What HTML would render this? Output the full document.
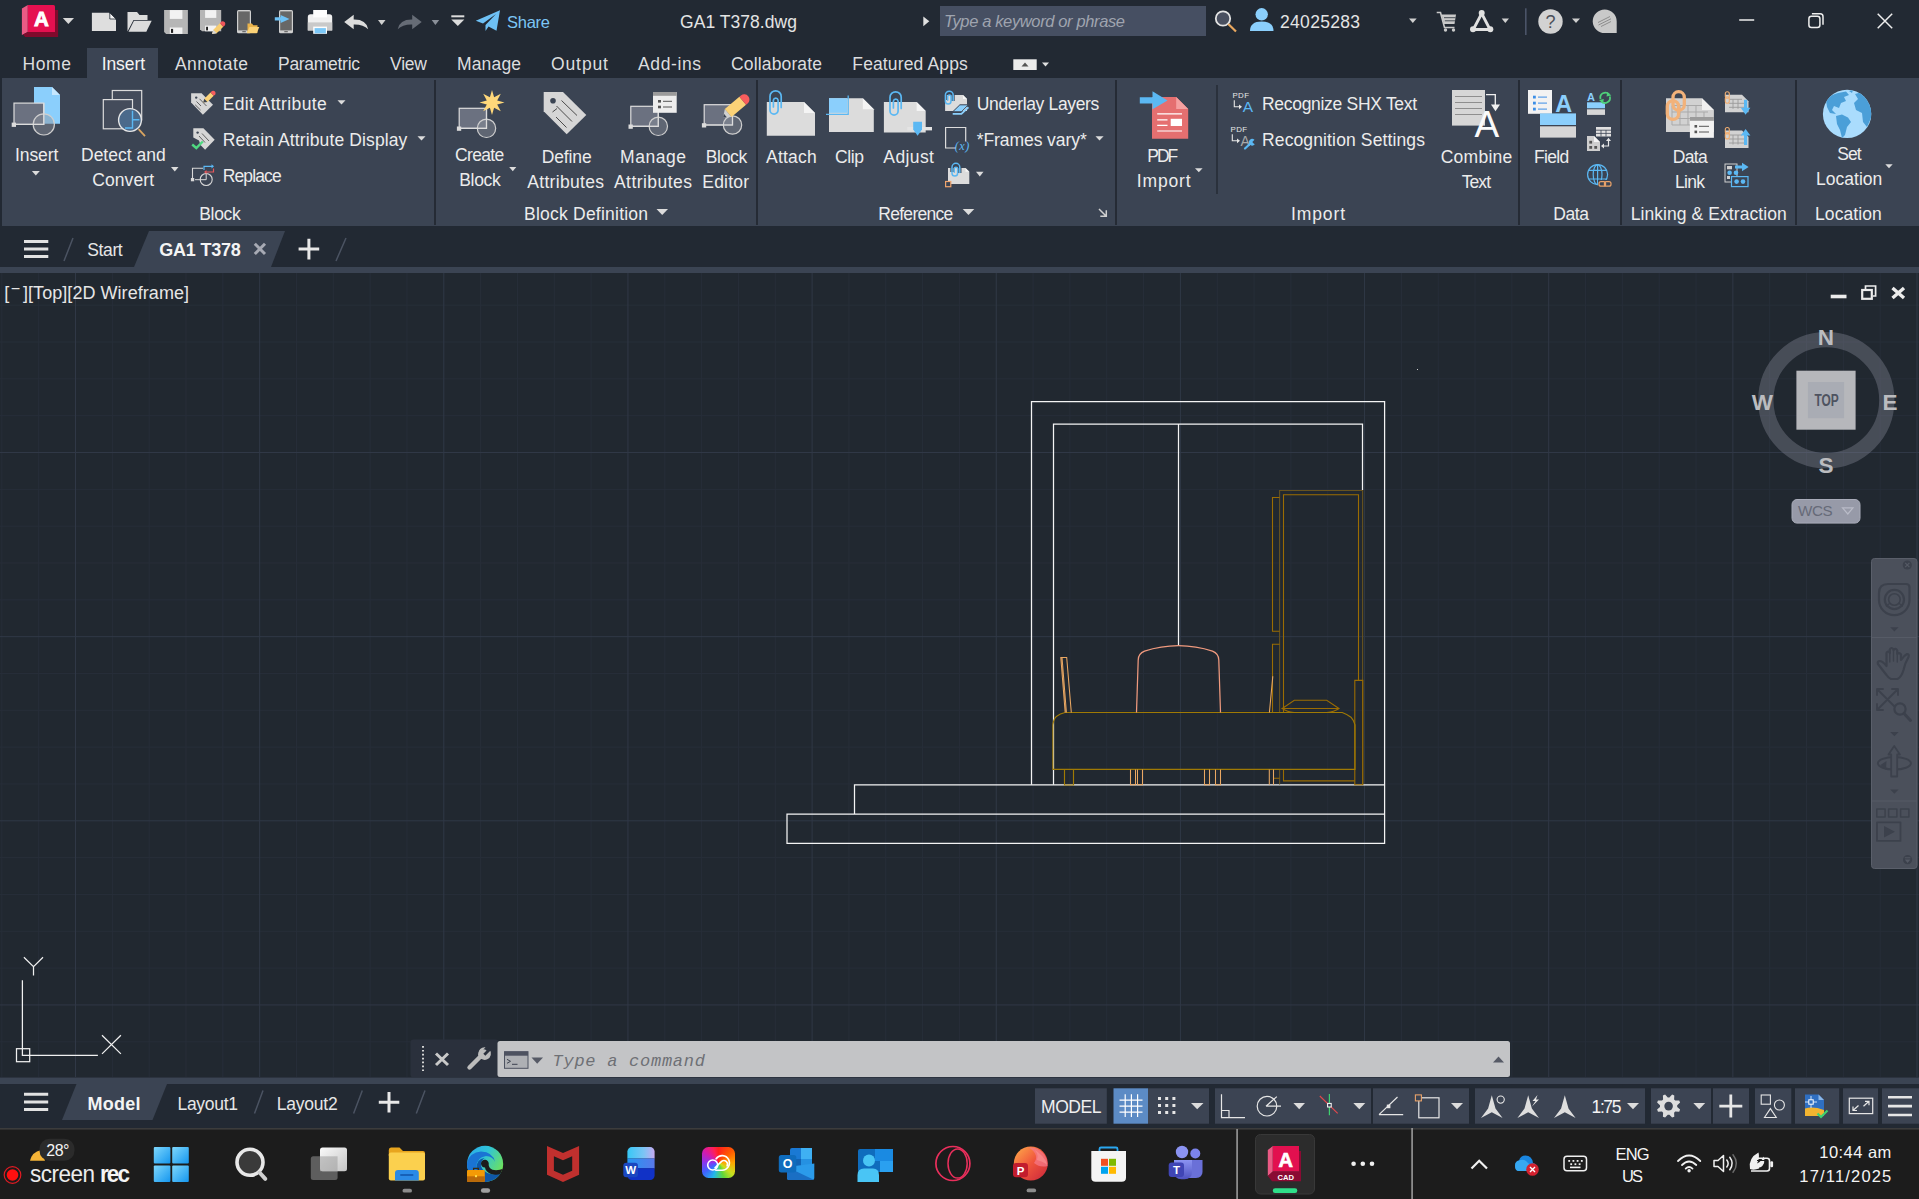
<!DOCTYPE html>
<html><head><meta charset="utf-8"><title>GA1 T378.dwg</title>
<style>
html,body{margin:0;padding:0;background:#212830;overflow:hidden}
#root{position:relative;width:1919px;height:1199px;overflow:hidden;background:#212830;font-family:"Liberation Sans",sans-serif}
.b{position:absolute;display:block}
.t{position:absolute;white-space:nowrap}
svg{overflow:visible}
</style></head><body><div id="root">
<!-- p_base -->
<div class="b" style="left:0;top:0;width:1919px;height:273px;background:#222933"></div>
<div class="b" style="left:2px;top:78px;width:1917px;height:148px;background:#3b4453"></div>
<div class="b" style="left:87px;top:48px;width:71px;height:31px;background:#3b4453"></div>
<div class="b" style="left:434px;top:80px;width:2px;height:145px;background:#252b35"></div>
<div class="b" style="left:756px;top:80px;width:2px;height:145px;background:#252b35"></div>
<div class="b" style="left:1115px;top:80px;width:2px;height:145px;background:#252b35"></div>
<div class="b" style="left:1518px;top:80px;width:2px;height:145px;background:#252b35"></div>
<div class="b" style="left:1620px;top:80px;width:2px;height:145px;background:#252b35"></div>
<div class="b" style="left:1794.5px;top:80px;width:2px;height:145px;background:#252b35"></div>
<div class="b" style="left:1216px;top:85px;width:2px;height:109px;background:#2a313c"></div>
<div class="b" style="left:0;top:267px;width:1919px;height:6px;background:#3b4453"></div>
<svg class="b" style="left:0;top:226px" width="400" height="47"><polygon points="149,5 285,5 271,41 134,41" fill="#3b4453"/><g stroke="#e2e2e2" stroke-width="3"><path d="M24 15.4H48.3M24 22.9H48.3M24 30.5H48.3"/></g><g stroke="#4b5362" stroke-width="1.5"><path d="M73 12L64 35M346 12L336 35"/></g><path d="M254.8 17.8L265 28M265 17.8L254.8 28" stroke="#a7aab4" stroke-width="3"/><path d="M298.6 23H319.2M308.9 12.8V33.4" stroke="#e8e8e8" stroke-width="3"/></svg>
<div class="t" style="left:507.0px;top:14px;font:16.5px/16.5px 'Liberation Sans',sans-serif;color:#7cc6f6;letter-spacing:-0.26px;">Share</div>
<div class="t" style="left:680.0px;top:14px;font:17.5px/17.5px 'Liberation Sans',sans-serif;color:#e4e4e4;letter-spacing:0.05px;">GA1 T378.dwg</div>
<div class="b" style="left:940px;top:6px;width:266px;height:30px;background:#464f62"></div>
<div class="t" style="left:944.0px;top:13px;font:italic 16.5px/16.5px 'Liberation Sans',sans-serif;color:#9fa4af;letter-spacing:-0.37px;">Type a keyword or phrase</div>
<div class="t" style="left:1280.0px;top:14px;font:17.5px/17.5px 'Liberation Sans',sans-serif;color:#e4e4e4;letter-spacing:0.31px;">24025283</div>
<div class="t" style="left:22.5px;top:56px;font:17.5px/17.5px 'Liberation Sans',sans-serif;color:#dcdddf;letter-spacing:0.61px;">Home</div>
<div class="t" style="left:101.7px;top:56px;font:17.5px/17.5px 'Liberation Sans',sans-serif;color:#f4f4f4;letter-spacing:-0.09px;">Insert</div>
<div class="t" style="left:175.0px;top:56px;font:17.5px/17.5px 'Liberation Sans',sans-serif;color:#dcdddf;letter-spacing:0.42px;">Annotate</div>
<div class="t" style="left:278.0px;top:56px;font:17.5px/17.5px 'Liberation Sans',sans-serif;color:#dcdddf;letter-spacing:-0.29px;">Parametric</div>
<div class="t" style="left:390.0px;top:56px;font:17.5px/17.5px 'Liberation Sans',sans-serif;color:#dcdddf;letter-spacing:-0.21px;">View</div>
<div class="t" style="left:457.0px;top:56px;font:17.5px/17.5px 'Liberation Sans',sans-serif;color:#dcdddf;letter-spacing:0.15px;">Manage</div>
<div class="t" style="left:551.0px;top:56px;font:17.5px/17.5px 'Liberation Sans',sans-serif;color:#dcdddf;letter-spacing:0.89px;">Output</div>
<div class="t" style="left:638.0px;top:56px;font:17.5px/17.5px 'Liberation Sans',sans-serif;color:#dcdddf;letter-spacing:0.61px;">Add-ins</div>
<div class="t" style="left:731.0px;top:56px;font:17.5px/17.5px 'Liberation Sans',sans-serif;color:#dcdddf;letter-spacing:0.15px;">Collaborate</div>
<div class="t" style="left:852.3px;top:56px;font:17.5px/17.5px 'Liberation Sans',sans-serif;color:#dcdddf;letter-spacing:0.14px;">Featured Apps</div>
<div class="t" style="left:222.7px;top:96px;font:17.5px/17.5px 'Liberation Sans',sans-serif;color:#ececec;letter-spacing:0.37px;">Edit Attribute</div>
<div class="t" style="left:222.7px;top:132px;font:17.5px/17.5px 'Liberation Sans',sans-serif;color:#ececec;letter-spacing:0.12px;">Retain Attribute Display</div>
<div class="t" style="left:222.7px;top:168px;font:17.5px/17.5px 'Liberation Sans',sans-serif;color:#ececec;letter-spacing:-0.87px;">Replace</div>
<div class="t" style="left:15.0px;top:147px;font:17.5px/17.5px 'Liberation Sans',sans-serif;color:#ececec;letter-spacing:-0.09px;">Insert</div>
<div class="t" style="left:81.0px;top:147px;font:17.5px/17.5px 'Liberation Sans',sans-serif;color:#ececec;">Detect and</div>
<div class="t" style="left:92.3px;top:172px;font:17.5px/17.5px 'Liberation Sans',sans-serif;color:#ececec;letter-spacing:0.07px;">Convert</div>
<div class="t" style="left:455.0px;top:147px;font:17.5px/17.5px 'Liberation Sans',sans-serif;color:#ececec;letter-spacing:-0.65px;">Create</div>
<div class="t" style="left:459.3px;top:172px;font:17.5px/17.5px 'Liberation Sans',sans-serif;color:#ececec;letter-spacing:-0.35px;">Block</div>
<div class="t" style="left:541.7px;top:149px;font:17.5px/17.5px 'Liberation Sans',sans-serif;color:#ececec;letter-spacing:-0.12px;">Define</div>
<div class="t" style="left:527.3px;top:174px;font:17.5px/17.5px 'Liberation Sans',sans-serif;color:#ececec;letter-spacing:0.31px;">Attributes</div>
<div class="t" style="left:620.0px;top:149px;font:17.5px/17.5px 'Liberation Sans',sans-serif;color:#ececec;letter-spacing:0.55px;">Manage</div>
<div class="t" style="left:614.0px;top:174px;font:17.5px/17.5px 'Liberation Sans',sans-serif;color:#ececec;letter-spacing:0.45px;">Attributes</div>
<div class="t" style="left:705.7px;top:149px;font:17.5px/17.5px 'Liberation Sans',sans-serif;color:#ececec;letter-spacing:-0.30px;">Block</div>
<div class="t" style="left:702.3px;top:174px;font:17.5px/17.5px 'Liberation Sans',sans-serif;color:#ececec;letter-spacing:0.20px;">Editor</div>
<div class="t" style="left:766.0px;top:149px;font:17.5px/17.5px 'Liberation Sans',sans-serif;color:#ececec;letter-spacing:0.22px;">Attach</div>
<div class="t" style="left:835.0px;top:149px;font:17.5px/17.5px 'Liberation Sans',sans-serif;color:#ececec;letter-spacing:-0.38px;">Clip</div>
<div class="t" style="left:883.3px;top:149px;font:17.5px/17.5px 'Liberation Sans',sans-serif;color:#ececec;letter-spacing:0.41px;">Adjust</div>
<div class="t" style="left:976.7px;top:96px;font:17.5px/17.5px 'Liberation Sans',sans-serif;color:#ececec;letter-spacing:-0.34px;">Underlay Layers</div>
<div class="t" style="left:976.7px;top:132px;font:17.5px/17.5px 'Liberation Sans',sans-serif;color:#ececec;letter-spacing:-0.07px;">*Frames vary*</div>
<div class="t" style="left:1147.3px;top:148px;font:17.5px/17.5px 'Liberation Sans',sans-serif;color:#ececec;letter-spacing:-2.00px;">PDF</div>
<div class="t" style="left:1136.7px;top:173px;font:17.5px/17.5px 'Liberation Sans',sans-serif;color:#ececec;letter-spacing:0.88px;">Import</div>
<div class="t" style="left:1262.0px;top:96px;font:17.5px/17.5px 'Liberation Sans',sans-serif;color:#ececec;letter-spacing:-0.30px;">Recognize SHX Text</div>
<div class="t" style="left:1262.0px;top:132px;font:17.5px/17.5px 'Liberation Sans',sans-serif;color:#ececec;letter-spacing:0.13px;">Recognition Settings</div>
<div class="t" style="left:1440.7px;top:149px;font:17.5px/17.5px 'Liberation Sans',sans-serif;color:#ececec;letter-spacing:0.26px;">Combine</div>
<div class="t" style="left:1461.7px;top:174px;font:17.5px/17.5px 'Liberation Sans',sans-serif;color:#ececec;letter-spacing:-0.93px;">Text</div>
<div class="t" style="left:1534.0px;top:149px;font:17.5px/17.5px 'Liberation Sans',sans-serif;color:#ececec;letter-spacing:-0.66px;">Field</div>
<div class="t" style="left:1672.7px;top:149px;font:17.5px/17.5px 'Liberation Sans',sans-serif;color:#ececec;letter-spacing:-0.66px;">Data</div>
<div class="t" style="left:1675.0px;top:174px;font:17.5px/17.5px 'Liberation Sans',sans-serif;color:#ececec;letter-spacing:-0.70px;">Link</div>
<div class="t" style="left:1837.3px;top:146px;font:17.5px/17.5px 'Liberation Sans',sans-serif;color:#ececec;letter-spacing:-0.93px;">Set</div>
<div class="t" style="left:1816.0px;top:171px;font:17.5px/17.5px 'Liberation Sans',sans-serif;color:#ececec;letter-spacing:0.02px;">Location</div>
<div class="t" style="left:199.3px;top:206px;font:17.5px/17.5px 'Liberation Sans',sans-serif;color:#ececec;letter-spacing:-0.35px;">Block</div>
<div class="t" style="left:524.0px;top:206px;font:17.5px/17.5px 'Liberation Sans',sans-serif;color:#ececec;letter-spacing:0.23px;">Block Definition</div>
<div class="t" style="left:878.3px;top:206px;font:17.5px/17.5px 'Liberation Sans',sans-serif;color:#ececec;letter-spacing:-0.72px;">Reference</div>
<div class="t" style="left:1291.0px;top:206px;font:17.5px/17.5px 'Liberation Sans',sans-serif;color:#ececec;letter-spacing:0.88px;">Import</div>
<div class="t" style="left:1553.3px;top:206px;font:17.5px/17.5px 'Liberation Sans',sans-serif;color:#ececec;letter-spacing:-0.42px;">Data</div>
<div class="t" style="left:1630.7px;top:206px;font:17.5px/17.5px 'Liberation Sans',sans-serif;color:#ececec;letter-spacing:0.07px;">Linking &amp; Extraction</div>
<div class="t" style="left:1815.0px;top:206px;font:17.5px/17.5px 'Liberation Sans',sans-serif;color:#ececec;letter-spacing:0.08px;">Location</div>
<div class="t" style="left:87.3px;top:242px;font:17.5px/17.5px 'Liberation Sans',sans-serif;color:#e6e6e6;letter-spacing:-0.39px;">Start</div>
<div class="t" style="left:159.3px;top:241px;font:bold 18px/18px 'Liberation Sans',sans-serif;color:#f4f4f4;letter-spacing:-0.23px;">GA1 T378</div>
<!-- p_topicons -->
<svg class="b" style="left:0;top:0" width="1919" height="78" viewBox="0 0 1919 78">
<polygon points="21.9,8.4 27.8,5 27.8,31.9 21.9,35" fill="#ea5a85"/><polygon points="27.8,31.9 55,31.9 55,10 58.1,10 58.1,36.9 25.2,36.9 23,34.4" fill="#800a2c"/><path d="M27.8 5H53.5Q55 5 55 6.5V31.9H27.8Z" fill="#e51050"/><text x="41.3" y="25.9" font-family="Liberation Sans,sans-serif" font-weight="bold" font-size="20.5" fill="#fff" stroke="#fff" stroke-width="0.9" text-anchor="middle">A</text>
<polygon points="62.8,18 74,18 68.4,24" fill="#d8d8d8"/>
<path d="M91.9 12.8H109L116 19.8V30.9H91.9Z" fill="#dedede"/><path d="M109.8 12.8V19H116Z" fill="#f4f4f4" stroke="#222933" stroke-width=".8"/>
<path d="M127.5 31.5V12H137L139.5 15H147.5V20H133.5Z" fill="#dcdcdc"/><path d="M128.5 31.7L134 20.8H151.7L146.3 31.7Z" fill="#dcdcdc"/>
<path d="M164.1 10.1H187.9V33.9H166.1L164.1 31.9Z" fill="#b6b6b6"/><rect x="169.8" y="10.1" width="12.6" height="8.8" fill="#f2f2f2"/><rect x="169.8" y="27.5" width="12.6" height="6.4" fill="#f2f2f2"/><rect x="171.0" y="28.9" width="2.1" height="4.0" fill="#222"/>
<path d="M200 10.1H221.2V31.299999999999997H202L200 29.299999999999997Z" fill="#b6b6b6"/><rect x="205.1" y="10.1" width="11.2" height="7.8" fill="#f2f2f2"/><rect x="205.1" y="25.6" width="11.2" height="5.7" fill="#f2f2f2"/><rect x="206.1" y="26.8" width="1.9" height="3.6" fill="#222"/><path d="M212 34L213.3 29.8L219.8 23.2L223.3 26.7L216.7 33.2Z" fill="#f8cd70"/><path d="M219.8 23.2L221.5 21.5Q223.2 20.6 224.5 22L225 22.6Q225.8 24.2 224.8 25.2L223.3 26.7Z" fill="#f0565a"/><path d="M212 34L213.3 29.8L216.7 33.2Z" fill="#d8d8d8"/>
<rect x="237" y="10" width="14" height="23.3" rx="1.6" fill="#cfcfcf"/><rect x="238.2" y="11.4" width="11.6" height="19" fill="#676767"/><rect x="242.3" y="31.2" width="3.5" height="1" fill="#555"/><path d="M247.5 33V23.5H252L253.3 25.3H257.5V33Z" fill="#e9b24a"/><path d="M246.8 33.3L249.5 27H259.3L256.7 33.3Z" fill="#fbd277"/>
<rect x="279" y="10" width="14" height="23.3" rx="1.6" fill="#cfcfcf"/><rect x="280.2" y="11.4" width="11.6" height="19" fill="#676767"/><rect x="284.3" y="31.2" width="3.5" height="1" fill="#555"/><path d="M274.8 17.2H280.6V15L289.5 18.9L280.6 23V20.5H274.8Z" fill="#6ec1f5"/>
<path d="M307.8 17Q307.8 14.3 310.5 14.3H329.5Q332.2 14.3 332.2 17V30.4H307.8Z" fill="#f0f0f0"/><rect x="307.8" y="22.4" width="24.4" height="8" fill="#c9c9c9"/><rect x="313.2" y="10" width="13.8" height="7.4" fill="#fdfdfd"/><rect x="313.2" y="26.6" width="13.8" height="7.2" fill="#fdfdfd"/><rect x="314.6" y="28.1" width="11.3" height="5.2" fill="#7cc8f8"/>
<g transform="translate(344.2,14.7)"><path d="M0 7.3L9.5 0V4.8Q22 4.5 24 14.5Q19 9.5 9.5 9.8V14.6Z" fill="#dcdcdc"/></g><polygon points="378,20 385.5,20 381.7,25" fill="#cfcfcf"/>
<g transform="translate(421.7,14.7) scale(-1,1)"><path d="M0 7.3L9.5 0V4.8Q22 4.5 24 14.5Q19 9.5 9.5 9.8V14.6Z" fill="#666c76"/></g><polygon points="431.7,20 439.2,20 435.4,25" fill="#8a8f98"/>
<rect x="451.3" y="15.3" width="13" height="2" fill="#dcdcdc"/><polygon points="451.3,19.5 464.3,19.5 457.8,26" fill="#dcdcdc"/>
<path d="M475.8 20.8L500 10.3L496.5 30.8L488.5 26.5L485.5 31V25L496 14L483 23.5Z" fill="#6ec1f5"/>
<polygon points="923.3,16.5 929.3,21.3 923.3,26.2" fill="#e0e0e0"/><circle cx="1223" cy="18.5" r="7.2" fill="#4a5060" stroke="#e4e4e4" stroke-width="1.8"/><path d="M1228.3 24L1236 31.5" stroke="#e9a75f" stroke-width="2.2"/><circle cx="1261.7" cy="14.3" r="6.2" fill="#8bcffc"/><path d="M1250 31Q1250 21.5 1261.7 21.5Q1273.5 21.5 1273.5 31Z" fill="#8bcffc"/>
<polygon points="1409,18.5 1416.7,18.5 1412.8,23" fill="#d0d0d0"/><path d="M1436.7 12.5H1440.5L1444.5 27.5H1454.5" fill="none" stroke="#c9c9c9" stroke-width="1.6"/><path d="M1441.5 14.5H1456L1454.5 24H1444Z" fill="#c9c9c9"/><circle cx="1445.5" cy="30" r="1.7" fill="#c9c9c9"/><circle cx="1453.5" cy="30" r="1.7" fill="#c9c9c9"/><path d="M1444 17.7H1455.5M1444.8 20.8H1455" stroke="#222933" stroke-width=".8"/>
<path d="M1481.7 13.5L1473.3 29.5H1490Z" fill="none" stroke="#e0e0e0" stroke-width="2.8" stroke-linejoin="round"/><circle cx="1481.7" cy="13" r="3" fill="#e0e0e0"/><circle cx="1473" cy="29.3" r="3" fill="#e0e0e0"/><circle cx="1490.3" cy="29.3" r="3" fill="#e0e0e0"/><polygon points="1501.7,18.5 1509,18.5 1505.3,23" fill="#d0d0d0"/><rect x="1525" y="8.3" width="1.6" height="26.7" fill="#4b5468"/><circle cx="1550.5" cy="21.5" r="12.2" fill="#d2d2d2"/><text x="1550.5" y="28" font-family="Liberation Sans,sans-serif" font-size="18" fill="#4a4f59" text-anchor="middle">?</text><polygon points="1572,18.5 1580,18.5 1576,23" fill="#d0d0d0"/><path d="M1592.7 21.5A12 12 0 0 1 1616.7 21.5V33H1604.7A12 12 0 0 1 1592.7 21.5Z" fill="#c9c9c9"/><path d="M1598 22.5L1610 16.5M1598.5 25L1611 18.8M1601 26.5L1611 21.5" stroke="#8d8d8d" stroke-width="1"/>
<g transform="translate(-0.8,-0.3)"><path d="M1740 20.3H1755" stroke="#eeeeee" stroke-width="1.5"/><rect x="1809.7" y="16.5" width="11" height="11.3" rx="2.5" fill="none" stroke="#eeeeee" stroke-width="1.5"/><path d="M1812.7 14H1821Q1823.8 14 1823.8 17V25" fill="none" stroke="#eeeeee" stroke-width="1.5"/><path d="M1878.5 14L1893 28.5M1893 14L1878.5 28.5" stroke="#eeeeee" stroke-width="1.5"/></g>
<rect x="1013.3" y="59.3" width="23.4" height="10.7" fill="#ececec"/><polygon points="1021.5,66.5 1028.5,66.5 1025,62.5" fill="#555"/><polygon points="1042,62.5 1049,62.5 1045.5,66.5" fill="#e0e0e0"/>
</svg>
<!-- p_ribicons -->
<svg class="b" style="left:0;top:0" width="1919" height="230" viewBox="0 0 1919 230">
<path d="M34 87H52L60 95V123.8H34Z" fill="#8bcffc"/><path d="M52 87V95H60Z" fill="#c6e7fe"/><rect x="14" y="103.1" width="29.8" height="21.3" fill="#6b7180" stroke="#dcdcdc" stroke-width="1.2"/><circle cx="43.8" cy="124.4" r="10.6" fill="#8b909c" fill-opacity=".45" stroke="#cfcfcf" stroke-width="1.2"/><path d="M43.8 103.1V124.4H14" fill="none" stroke="#dcdcdc" stroke-width="1.2"/><rect x="11.7" y="122.60000000000001" width="4.3" height="4.3" fill="#dcdcdc"/>
<polygon points="31.9,171 39.8,171 35.8,175.6" fill="#dcdcdc"/><rect x="112.3" y="90.5" width="29.4" height="29.4" fill="#444c5b" stroke="#dcdcdc" stroke-width="1.2"/><rect x="103.3" y="99.6" width="29.2" height="29.2" fill="#444c5b" stroke="#dcdcdc" stroke-width="1.2"/><circle cx="130" cy="120" r="11.4" fill="#4b6a8b" stroke="#e6e6e6" stroke-width="1.4"/><path d="M125 128H132.5V110.8M132.5 119.8H139.4" fill="none" stroke="#5bb8f3" stroke-width="1.4"/><path d="M138.6 129.2L145 136.2" stroke="#d9a560" stroke-width="1.8"/>
<polygon points="171,166.9 178.5,166.9 174.8,171.6" fill="#dcdcdc"/><polygon points="191.1,93.3 201.6,93.3 213,104.7 202.9,114.7 191.1,102.5" fill="#d6d6d6"/><circle cx="196.2" cy="97.6" r="1.2" fill="#3b4453"/><path d="M196.5 101.5L201 106M199.5 98.8L206.5 106M195.2 104.8L200.5 110" stroke="#555" stroke-width=".9"/><path d="M203.2 102.6L204.3 98.8L210.5 92.6L213.7 95.8L207.4 102Z" fill="#fbd277"/><path d="M210.5 92.6L212 91.1Q213.7 90.2 215 91.6Q216.2 93 215.2 94.5L213.7 95.8Z" fill="#f85d5d"/><path d="M203.2 102.6L204.3 98.8L207.4 102Z" fill="#3b4453"/>
<polygon points="337.5,100.3 345.5,100.3 341.5,104.6" fill="#dcdcdc"/><polygon points="193.3,128.3 203.4,128.3 214.7,139.7 205.1,149.7 200.5,145 199,140.5 193.3,137.5" fill="#d6d6d6"/><circle cx="197.6" cy="132.6" r="1.2" fill="#3b4453"/><path d="M199 136L205 142.5M202 133.5L209 141" stroke="#555" stroke-width=".9"/><path d="M192.2 144.5L196.3 148L202.8 141.5" fill="none" stroke="#4fd880" stroke-width="2.4"/>
<polygon points="417.5,136.3 425.5,136.3 421.5,140.6" fill="#dcdcdc"/><path d="M192.5 178.5V168.3H203" fill="none" stroke="#d8d8d8" stroke-width="1.1"/><rect x="190.9" y="178" width="3.3" height="3.3" fill="#d8d8d8"/><circle cx="206.2" cy="179.5" r="6" fill="none" stroke="#d8d8d8" stroke-width="1.1"/><path d="M195 179.7H206.2V173" fill="none" stroke="#d8d8d8" stroke-width="1"/><path d="M204 170V166.3H212" fill="none" stroke="#5bb8f3" stroke-width="1.2"/><polygon points="211.5,164.2 214,166.3 211.5,168.4" fill="#5bb8f3"/><path d="M213.5 168.5V172H206" fill="none" stroke="#e5585c" stroke-width="1.2"/><polygon points="206.5,170 204,172 206.5,174" fill="#e5585c"/>
<rect x="459.2" y="108.3" width="27.3" height="20.0" fill="#6b7180" stroke="#dcdcdc" stroke-width="1.2"/><circle cx="486.5" cy="128.3" r="9.2" fill="#8b909c" fill-opacity=".45" stroke="#cfcfcf" stroke-width="1.2"/><path d="M486.5 108.3V128.3H459.2" fill="none" stroke="#dcdcdc" stroke-width="1.2"/><rect x="456.9" y="126.50000000000001" width="4.3" height="4.3" fill="#dcdcdc"/><polygon points="492.0,90.0 494.1,97.3 500.8,93.7 497.2,100.4 504.5,102.5 497.2,104.6 500.8,111.3 494.1,107.7 492.0,115.0 489.9,107.7 483.2,111.3 486.8,104.6 479.5,102.5 486.8,100.4 483.2,93.7 489.9,97.3" fill="#ffd87a"/>
<polygon points="509.2,167 516.3,167 512.8,171.3" fill="#dcdcdc"/><polygon points="543.7,92 563,92 586.3,115 566.7,134.2 543.7,111.3" fill="#d6d6d6"/><circle cx="553" cy="100.8" r="2.8" fill="#3b4453"/><path d="M561.5 100.5L577 115.5M556.5 106L572 121.5M552.5 112L557 108.5M556 117L566.5 127.5" stroke="#4b4b4b" stroke-width="1"/>
<rect x="630.8" y="106.3" width="27.5" height="20.0" fill="#6b7180" stroke="#dcdcdc" stroke-width="1.2"/><circle cx="658.3" cy="126.3" r="9.2" fill="#8b909c" fill-opacity=".45" stroke="#cfcfcf" stroke-width="1.2"/><path d="M658.3 106.3V126.3H630.8" fill="none" stroke="#dcdcdc" stroke-width="1.2"/><rect x="628.5" y="124.5" width="4.3" height="4.3" fill="#dcdcdc"/><rect x="653" y="92" width="23.7" height="20.8" fill="#ededed"/><rect x="653" y="92" width="23.7" height="3.8" fill="#9b9b9b"/><rect x="658" y="100" width="3" height="2.6" fill="#555"/><rect x="658" y="105.7" width="3" height="2.6" fill="#555"/><path d="M663 101.3H672M663 107H672" stroke="#555" stroke-width="1"/>
<rect x="704.2" y="104.7" width="28.3" height="20.3" fill="#6b7180" stroke="#dcdcdc" stroke-width="1.2"/><circle cx="732.5" cy="125" r="9.2" fill="#8b909c" fill-opacity=".45" stroke="#cfcfcf" stroke-width="1.2"/><path d="M732.5 104.7V125H704.2" fill="none" stroke="#dcdcdc" stroke-width="1.2"/><rect x="701.9000000000001" y="123.2" width="4.3" height="4.3" fill="#dcdcdc"/><g transform="translate(723.2,117.2) rotate(-40)"><polygon points="0,0 6.5,-5.2 6.5,5.2" fill="#d0d0d0"/><polygon points="0,0 2.7,-2.1 2.7,2.1" fill="#3b4453"/><rect x="6.5" y="-5.2" width="19" height="10.4" fill="#fbd277"/><path d="M25.5 -5.2H27.5A5.2 5.2 0 0 1 27.5 5.2H25.5Z" fill="#f85d5d"/></g>
<path d="M766.8 102.1H804L815 113.1V135.7H766.8Z" fill="#dcdcdc"/><path d="M804 102.1V113.1H815Z" fill="#f4f4f4"/><path d="M781.2 107.5V96.4A5.6 5.6 0 0 0 770.0 96.4V110.0A4.0 4.0 0 0 0 778.1 110.0V100.1A2.4 2.4 0 0 0 773.4 100.1V107.0" fill="none" stroke="#5bb8f3" stroke-width="1.7" stroke-linecap="round"/>
<path d="M829 98.2H862.8L873.8 109.2V132H829Z" fill="#dcdcdc"/><path d="M862.8 98.2V109.2H873.8Z" fill="#f4f4f4"/><rect x="829" y="98.2" width="18" height="14.6" fill="#8bcffc"/><path d="M848.2 95.4V114.3H826" fill="none" stroke="#5bb8f3" stroke-width="1.3"/>
<path d="M883.9 102.1H916.7L925.7 111.1V132.5H883.9Z" fill="#dcdcdc"/><path d="M916.7 102.1V111.1H925.7Z" fill="#f4f4f4"/><path d="M901.2 108.5V97.4A5.6 5.6 0 0 0 890.0 97.4V111.0A4.0 4.0 0 0 0 898.1 111.0V101.1A2.4 2.4 0 0 0 893.4 101.1V108.0" fill="none" stroke="#5bb8f3" stroke-width="1.7" stroke-linecap="round"/><rect x="907.3" y="127" width="24.7" height="3.4" fill="#e4e4e4"/><polygon points="913.2,121.7 922,121.7 922,129.5 917.6,135.7 913.2,129.5" fill="#5bb8f3"/>
<path d="M945.1 95H963L967 99V110.9H945.1Z" fill="#dcdcdc"/><path d="M963 95V99H967Z" fill="#f6f6f6"/><g stroke="#3b4453" stroke-width="3.4" fill="none" opacity=".9"><path d="M953 101V95A3.9 3.9 0 0 0 945.2 95V100"/></g><path d="M953.2 100.4V95.1A3.9 3.9 0 0 0 945.4 95.1V101.2A2.8 2.8 0 0 0 951.0 101.2V96.7A1.6 1.6 0 0 0 947.7 96.7V100.2" fill="none" stroke="#5bb8f3" stroke-width="1.5" stroke-linecap="round"/><polygon points="959.9,104.8 968.4,104.8 961.4,111.8 952.7,111.8" fill="#8bcffc" stroke="#3b4453" stroke-width="1"/><path d="M952.7 113.9H961.4L968.4 107.3" fill="none" stroke="#8bcffc" stroke-width="1.9"/>
<path d="M956 148H945.6V127.5H965.7V141.5" fill="none" stroke="#dcdcdc" stroke-width="1.2"/><text x="954.8" y="150" font-family="Liberation Serif,serif" font-style="italic" font-size="12.2" fill="#5bb8f3" textLength="14.5">(x)</text>
<polygon points="1095.5,136.3 1103.6,136.3 1099.5,140.5" fill="#dcdcdc"/><path d="M948 168H965.5L969.3 171.8V183.9H948Z" fill="#dcdcdc"/><path d="M965.5 168V171.8H969.3Z" fill="#f6f6f6"/><g stroke="#3b4453" stroke-width="3.4" fill="none" opacity=".9"><path d="M959.8 173V167A3.9 3.9 0 0 0 952 167V172"/></g><path d="M959.8 172.5V167.2A3.9 3.9 0 0 0 952.0 167.2V173.3A2.8 2.8 0 0 0 957.6 173.3V168.8A1.6 1.6 0 0 0 954.3 168.8V172.3" fill="none" stroke="#5bb8f3" stroke-width="1.5" stroke-linecap="round"/><rect x="945.6" y="181.5" width="5.2" height="5.2" fill="#3b4453" stroke="#f0a56e" stroke-width="1.2"/><polygon points="976,171.8 983.5,171.8 979.8,176.4" fill="#dcdcdc"/><polygon points="962.7,209 974.3,209 968.5,215" fill="#dcdcdc"/><polygon points="656.5,209 668,209 662.2,215" fill="#dcdcdc"/><path d="M1099 209L1105.5 215.5M1106.3 210.3V216.3H1100.3" fill="none" stroke="#d0d0d0" stroke-width="1.5"/>
<path d="M1152 96.9H1176.2L1188.2 108.9V138.7H1152Z" fill="#e56f70"/><path d="M1176.2 96.9V108.9H1188.2Z" fill="#f5a1a1"/><path d="M1157.2 113.8H1182M1157.2 119.8H1167.5M1157.2 125.4H1167.5M1157.2 131H1182" stroke="#fff" stroke-width="1.2"/><rect x="1170.7" y="118.8" width="11.3" height="7.2" fill="#fff"/><path d="M1139.8 97.3H1152.5V91.3L1167.5 100.4L1152.5 109.2V103.5H1139.8Z" fill="#5bb8f3"/>
<polygon points="1195,168.2 1202.6,168.2 1198.8,172.3" fill="#dcdcdc"/><text x="1232.4" y="97.8" font-family="Liberation Sans,sans-serif" font-size="7.9" fill="#e6e6e6" textLength="16.6">PDF</text><path d="M1234.3 100.3V106.8H1240" fill="none" stroke="#e6e6e6" stroke-width="1.1"/><polygon points="1239,104.4 1242,106.8 1239,109.2" fill="#e6e6e6"/><text x="1242.8" y="112" font-family="Liberation Sans,sans-serif" font-size="15.5" fill="#5bb8f3">A</text>
<text x="1230.6" y="132" font-family="Liberation Sans,sans-serif" font-size="7.9" fill="#e6e6e6" textLength="16.6">PDF</text><path d="M1232.3 134.3V140.8H1238" fill="none" stroke="#e6e6e6" stroke-width="1.1"/><polygon points="1237,138.4 1240,140.8 1237,143.2" fill="#e6e6e6"/><text x="1240.6" y="146" font-family="Liberation Sans,sans-serif" font-size="14" fill="#a8a8a8">A</text><path d="M1245 148.5L1251.5 142.5" stroke="#5bb8f3" stroke-width="2.2" stroke-linecap="round"/><path d="M1254.5 139.8A3.3 3.3 0 1 0 1254.8 144.2L1252 142.3Z" fill="#5bb8f3"/>
<rect x="1452" y="90" width="33" height="35.6" fill="#d6d6d6"/><path d="M1455 96.5H1482M1455 102.5H1482M1455 108.5H1482M1455 114.5H1482" stroke="#8e8e8e" stroke-width="1"/><path d="M1486 94.6H1495.3V105" fill="none" stroke="#f0f0f0" stroke-width="1.3"/><polygon points="1491,104.4 1500,104.4 1495.5,111.3" fill="#f0f0f0"/><text x="1486.8" y="137.2" font-family="Liberation Sans,sans-serif" font-size="37" fill="#fafafa" text-anchor="middle">A</text>
<rect x="1528" y="90" width="24" height="23.8" fill="#f2f2f2"/><rect x="1533" y="95.7" width="2.8" height="2.8" fill="#3b8ee6"/><path d="M1538 97.1H1547" stroke="#3b8ee6" stroke-width="1"/><rect x="1533" y="101.7" width="2.8" height="2.8" fill="#3b8ee6"/><path d="M1538 103.1H1547" stroke="#3b8ee6" stroke-width="1"/><rect x="1533" y="107.7" width="2.8" height="2.8" fill="#3b8ee6"/><path d="M1538 109.1H1547" stroke="#3b8ee6" stroke-width="1"/><text x="1563.8" y="111.5" font-family="Liberation Sans,sans-serif" font-weight="bold" font-size="23.5" fill="#8bcffc" text-anchor="middle">A</text><rect x="1540" y="113.4" width="36" height="11.6" fill="#8bcffc"/><rect x="1540" y="126.3" width="36" height="11.3" fill="#d6d6d6"/>
<text x="1587" y="101" font-family="Liberation Sans,sans-serif" font-weight="bold" font-size="11" fill="#8bcffc">A</text><rect x="1587" y="102.3" width="18" height="6" fill="#8bcffc"/><rect x="1587" y="109.3" width="18" height="5.6" fill="#d6d6d6"/><path d="M1600.5 99A5 5 0 0 1 1609 94.3M1609.8 96.5A5 5 0 0 1 1601.3 101.3" fill="none" stroke="#4fd07a" stroke-width="1.8"/><polygon points="1607.3,92 1611.3,95.6 1606.5,96.6" fill="#4fd07a"/><polygon points="1603,103.6 1599,100 1603.8,99" fill="#4fd07a"/>
<rect x="1596" y="127" width="15" height="9.5" fill="#e0e0e0"/><path d="M1596 130.2H1611M1596 133.4H1611M1601 130V136.5M1606 130V136.5" stroke="#3b4453" stroke-width=".8"/><path d="M1587 136H1594L1600 142V151H1587Z" fill="#cfcfcf"/><path d="M1594 136V142H1600Z" fill="#f4f4f4"/><rect x="1589.3" y="140.8" width="2.8" height="2.8" fill="#555"/><rect x="1589.3" y="146" width="2.8" height="2.8" fill="#555"/><rect x="1594.3" y="146" width="2.8" height="2.8" fill="#555"/><path d="M1603 146H1608.5V140.5" fill="none" stroke="#e6e6e6" stroke-width="1.2"/><polygon points="1606,141 1608.5,137.8 1611,141" fill="#e6e6e6"/><polygon points="1604,143.6 1601,146 1604,148.4" fill="#e6e6e6"/>
<g fill="none" stroke="#5bb8f3" stroke-width="1.2"><circle cx="1597.6" cy="174.6" r="10"/><ellipse cx="1597.6" cy="174.6" rx="4.4" ry="10"/><path d="M1597.6 164.6V184.6M1588.5 170.3H1606.7M1588.5 179H1606.7"/></g><rect x="1598" y="180" width="14" height="7.5" fill="#3b4453"/><rect x="1599" y="181.6" width="6.6" height="4.6" rx="2" fill="none" stroke="#e9a36a" stroke-width="1.2"/><rect x="1604.4" y="181.6" width="6.6" height="4.6" rx="2" fill="none" stroke="#e9a36a" stroke-width="1.2"/>
<path d="M1666 98.2H1702L1713.9 110V132H1666Z" fill="#d2d2d2"/><path d="M1702 98.2V110H1713.9Z" fill="#f0f0f0"/><path d="M1672 105.5H1702M1672 112H1708M1672 118.5H1708M1672 125H1708M1672 105.5V125M1680 105.5V125M1688 105.5V125M1696 105.5V125M1704 112V125" stroke="#a9a9a9" stroke-width="1"/><rect x="1689.9" y="117" width="24" height="20.8" fill="#f2f2f2"/><rect x="1689.9" y="117" width="24" height="3.8" fill="#9b9b9b"/><rect x="1694.5" y="125" width="2.6" height="2.6" fill="#555"/><rect x="1694.5" y="130.6" width="2.6" height="2.6" fill="#555"/><path d="M1699 126.3H1709M1699 132H1709" stroke="#555" stroke-width="1"/><rect x="1673" y="91.7" width="11.3" height="18.6" rx="5.6" fill="none" stroke="#f2b27a" stroke-width="3.3"/><rect x="1667.3" y="100.8" width="11.3" height="18.6" rx="5.6" fill="none" stroke="#f2b27a" stroke-width="3.3"/>
<path d="M1725 94.8H1742L1748.5 101.3V112.3H1725Z" fill="#d2d2d2"/><path d="M1729 99.3H1742M1729 103.3H1745M1729 107.3H1745M1733 99.3V108.8M1738 99.3V108.8" stroke="#9a9a9a" stroke-width=".9"/><rect x="1725.3" y="91.8" width="4" height="6.4" rx="2" fill="none" stroke="#f0ae72" stroke-width="1.1"/><rect x="1725.3" y="96.8" width="4" height="6.4" rx="2" fill="none" stroke="#f0ae72" stroke-width="1.1"/><path d="M1744 99.8V107.8H1740.8L1745.6 114.8L1750.4 107.8H1747.2V99.8Z" fill="#5bb8f3"/><path d="M1725 130.5H1742L1748.5 137.0V148.0H1725Z" fill="#d2d2d2"/><path d="M1729 135.0H1742M1729 139.0H1745M1729 143.0H1745M1733 135.0V144.5M1738 135.0V144.5" stroke="#9a9a9a" stroke-width=".9"/><rect x="1725.3" y="127.5" width="4" height="6.4" rx="2" fill="none" stroke="#f0ae72" stroke-width="1.1"/><rect x="1725.3" y="132.5" width="4" height="6.4" rx="2" fill="none" stroke="#f0ae72" stroke-width="1.1"/><path d="M1744 145.0V135.5H1740.8L1745.6 129.0L1750.4 135.5H1747.2V145.0Z" fill="#5bb8f3"/>
<rect x="1725" y="164" width="12" height="18" fill="none" stroke="#d0d0d0" stroke-width="1"/><rect x="1727" y="166" width="5" height="3.3" fill="#d0d0d0"/><rect x="1727" y="176" width="3" height="3" fill="#d0d0d0"/><circle cx="1729.6" cy="172.8" r="2.3" fill="#5bb8f3"/><circle cx="1736" cy="172.8" r="2.3" fill="#5bb8f3"/><path d="M1735 165.5H1742V162.7L1748.6 167L1742 171.3V168.5H1735Z" fill="#5bb8f3"/><rect x="1731.5" y="176.6" width="16.5" height="10" fill="#3b4453" stroke="#5bb8f3" stroke-width="1.2"/><circle cx="1736.6" cy="181.6" r="2.3" fill="#5bb8f3"/><circle cx="1743" cy="181.6" r="2.3" fill="#5bb8f3"/>
<circle cx="1847.1" cy="113.9" r="24.2" fill="#aadcfd"/><clipPath id="gc"><circle cx="1847.1" cy="113.9" r="24.2"/></clipPath><g clip-path="url(#gc)" fill="#4b9fd8"><path d="M1826 100Q1830 95 1838 93L1846 91.5L1849 95L1844 97L1846 101L1841 103L1839 108L1834 106L1832 110L1836 114L1830 113L1827 107Z"/><path d="M1836 116L1842 114.5L1848 117.5L1851 122L1847 127L1845 135L1842 138L1840 130L1837 124Z"/><path d="M1855 94L1862 92L1868 97L1872 104L1871 118L1867 127L1863 122L1862 113L1856 110L1854 103L1858 99Z"/><path d="M1849 91L1853 90L1852 93Z"/></g>
<polygon points="1885.3,164.3 1892.7,164.3 1889.0,168.3" fill="#dcdcdc"/></svg>
<!-- p_draw -->
<svg class="b" style="left:0;top:273px" width="1919" height="805" viewBox="0 273 1919 805">
<rect x="0" y="273" width="1919" height="805" fill="#212830"/>
<path d="M1.84 273V1078M38.67 273V1078M112.33 273V1078M149.16 273V1078M185.99 273V1078M222.82 273V1078M296.48 273V1078M333.31 273V1078M370.14 273V1078M406.97 273V1078M480.63 273V1078M517.46 273V1078M554.29 273V1078M591.12 273V1078M664.78 273V1078M701.61 273V1078M738.44 273V1078M775.27 273V1078M848.93 273V1078M885.76 273V1078M922.59 273V1078M959.42 273V1078M1033.08 273V1078M1069.91 273V1078M1106.74 273V1078M1143.57 273V1078M1217.23 273V1078M1254.06 273V1078M1290.89 273V1078M1327.72 273V1078M1401.38 273V1078M1438.21 273V1078M1475.04 273V1078M1511.87 273V1078M1585.53 273V1078M1622.36 273V1078M1659.19 273V1078M1696.02 273V1078M1769.68 273V1078M1806.51 273V1078M1843.34 273V1078M1880.17 273V1078M0 305.18H1919M0 342.01H1919M0 378.84H1919M0 415.67H1919M0 489.33H1919M0 526.16H1919M0 562.99H1919M0 599.82H1919M0 673.48H1919M0 710.31H1919M0 747.14H1919M0 783.97H1919M0 857.63H1919M0 894.46H1919M0 931.29H1919M0 968.12H1919M0 1041.78H1919" stroke="#272e39" stroke-width="1" fill="none"/>
<path d="M75.5 273V1078M259.65 273V1078M443.8 273V1078M627.95 273V1078M812.1 273V1078M996.25 273V1078M1180.4 273V1078M1364.55 273V1078M1548.7 273V1078M1732.85 273V1078M1917.0 273V1078M0 452.5H1919M0 636.65H1919M0 820.8H1919M0 1004.95H1919" stroke="#303846" stroke-width="1" fill="none"/>
<g fill="none" stroke="#f4f4f4" stroke-width="1.25"><path d="M1031.5 784.8V401.6H1384.6V843.3H787V814H1384.6"/><path d="M854.5 814V784.8H1384.6"/><path d="M1053.5 784.8V424H1362.5V490"/><path d="M1178.5 424V645.7"/></g>
<g fill="none" stroke="#67531f" stroke-width="1.1"><path d="M1279.6 712.5V490.5H1362.6V784.5M1279.6 769.3V784.5"/></g>
<g fill="none" stroke="#9a6c02" stroke-width="1.1"><path d="M1283.5 712.5V494.7H1358.5V680.4"/><path d="M1279.6 497.5H1272.5V631.3H1279.6M1279.6 644.3H1272.5V712.5"/><path d="M1354.8 680.4H1362.8V784.8H1354.8Z"/><path d="M1282.3 708.5L1294.3 700.3H1326.7L1339 708.5Q1334 712 1326.7 712.5M1294.3 712.5Q1287 712 1282.3 708.5H1339"/><path d="M1283.5 769.3V780.9H1354.8M1273.5 778.2H1279.6"/></g>
<g fill="none" stroke="#a07a04" stroke-width="1.15"><path d="M1052.9 769.3V725Q1053.5 718.5 1056.7 716.2Q1060 713.5 1065 712.5H1342.2Q1347.5 714.5 1351 717.2Q1353.5 720 1355 724.8V769.3ZM1052.9 769.3H1355"/><path d="M1064.5 769.3V785H1073.5V769.3"/></g>
<g fill="none" stroke="#eaa863" stroke-width="1.05"><path d="M1130.5 769.5V784.8H1135.5V769.5M1137.5 769.5V784.8H1142.5V769.5M1204.5 769.5V784.8H1209.5V769.5M1215.5 769.5V784.8H1220.5V769.5M1269.3 769.5V784.8M1273.5 769.5V784.8"/><path d="M1065.2 712.5L1060.8 657.4H1066.7L1071.3 712.5M1062 657.4L1066.4 712.5"/><path d="M1272.8 676.3L1269.4 712.5"/></g>
<path d="M1136.5 712.5L1138.2 660Q1138.3 653.8 1144.5 651.2Q1161 645.8 1178.5 645.7Q1196 645.8 1212.5 651.2Q1218.7 653.8 1218.8 660L1220.5 712.5" fill="none" stroke="#f09a7e" stroke-width="1.25"/>
<rect x="1417" y="369" width="1" height="1" fill="#ccc"/><g fill="none" stroke="#f0f0f0" stroke-width="1.25"><rect x="16.5" y="1048.7" width="13.2" height="13"/><path d="M22.4 980.3V1055.4H97.9"/><path d="M23.9 957.3L33.5 966.6L43 957.3M33.5 966.6V975.6M102 1035.2L120.9 1053.9M120.9 1035.2L102 1053.9"/></g>
<g stroke="#ececec" fill="none"><path d="M1830.7 296.5H1846.5" stroke-width="3.6"/><rect x="1862.2" y="290" width="9.6" height="8.8" stroke-width="2.2"/><path d="M1865.5 289V286H1875.6V296H1873" stroke-width="1.7"/><path d="M1892.5 288L1904 298M1904 288L1892.5 298" stroke-width="3.4"/></g>
<circle cx="1826.3" cy="400.2" r="60.5" fill="none" stroke="#828494" stroke-opacity=".4" stroke-width="15.3"/><rect x="1796.4" y="370.7" width="59.2" height="59" fill="#b6b7bb"/><rect x="1807.9" y="382" width="36.2" height="36.2" fill="#a9acb4"/><text x="1814.4" y="405.8" font-family="Liberation Sans,sans-serif" font-weight="bold" font-size="15.8" fill="#4e5360" textLength="24.3" lengthAdjust="spacingAndGlyphs">TOP</text><text x="1825.9" y="345.1" font-family="Liberation Sans,sans-serif" font-weight="bold" font-size="22.5" fill="#bbbcbf" text-anchor="middle">N</text><text x="1825.9" y="473.1" font-family="Liberation Sans,sans-serif" font-weight="bold" font-size="22.5" fill="#bbbcbf" text-anchor="middle">S</text><text x="1762.4" y="409.5" font-family="Liberation Sans,sans-serif" font-weight="bold" font-size="22.5" fill="#bbbcbf" text-anchor="middle">W</text><text x="1890" y="409.5" font-family="Liberation Sans,sans-serif" font-weight="bold" font-size="22.5" fill="#bbbcbf" text-anchor="middle">E</text>
<rect x="1792" y="499.5" width="68" height="23.6" rx="5" fill="#979aa8" stroke="#a9acb9" stroke-width="1"/><text x="1798.1" y="516" font-family="Liberation Sans,sans-serif" font-size="15.2" fill="#666a78" textLength="34.5">WCS</text><polygon points="1842.5,507.8 1853,507.8 1847.8,514" fill="#979aa8" stroke="#b9bbc7" stroke-width="1.2"/>
<rect x="1871.5" y="558.5" width="45.5" height="310" rx="3" fill="#4b505b" stroke="#5a5f6a" stroke-width="1"/><path d="M1872 637.5H1917M1872 801H1917" stroke="#565b66" stroke-width="1"/><circle cx="1907.3" cy="565" r="4.6" fill="#3c414c"/><path d="M1905.2 562.9L1909.4 567.1M1909.4 562.9L1905.2 567.1" stroke="#555a65" stroke-width="1.2"/><g fill="none" stroke="#3c414c" stroke-width="2.2" stroke-linejoin="round" stroke-linecap="round"><path d="M1888 584H1906Q1909.5 584 1909.5 587.5V600A15.2 15.2 0 0 1 1894.3 615.2A15.2 15.2 0 0 1 1879 600V593Q1879 584 1888 584Z"/><circle cx="1894.4" cy="599.5" r="9.6"/><circle cx="1894.4" cy="599.5" r="5.8" stroke-width="1.6"/><path d="M1886.5 606L1889.5 603.5M1902.3 606L1899.3 603.5" stroke-width="1.4"/><path d="M1886.5 675Q1881 668 1878 664Q1877 661.5 1879.5 661Q1882.5 661 1886.5 666V653Q1887.8 650 1889.8 653V649.5Q1891.5 646.5 1893.5 649.5V650Q1895.3 647.5 1897.3 650.5V654Q1899 652 1901 654.5V660Q1904 655.5 1907 654Q1909.5 654 1908.5 657Q1905 663 1903.5 670Q1901.5 677 1897.5 679H1891Q1888.5 678 1886.5 675Z"/><path d="M1889.8 653V662M1893.5 650V661M1897.3 652V662" stroke-width="1.4"/><path d="M1877 689L1898 710M1898 689L1877 710M1877 695V689H1883M1892 689H1898V695M1877 704V710H1883" stroke-width="1.8"/><circle cx="1900" cy="709" r="5.6" fill="#4b505b"/><path d="M1904.5 714L1910.5 720.5" stroke-width="3"/><ellipse cx="1894.4" cy="763.3" rx="16.5" ry="6.3" stroke-width="2"/><path d="M1891.2 776.5V754.5H1888.5L1894.2 746L1899.9 754.5H1897.2V776.5Z" fill="#4b505b" stroke-width="1.8"/><rect x="1876.8" y="809" width="8.3" height="8" stroke-width="1.5"/><rect x="1888.6" y="809" width="8.3" height="8" stroke-width="1.5"/><rect x="1900.6" y="809" width="8.3" height="8" stroke-width="1.5"/><rect x="1877" y="822.3" width="23.5" height="18.6" stroke-width="1.8"/></g><polygon points="1880.5,765 1886.5,761 1886,770" fill="#3c414c"/><polygon points="1884,826 1884,837.5 1895,831.7" fill="#3c414c"/><polygon points="1890.2,627.3 1898.6,627.3 1894.4,631.5999999999999" fill="#3c414c"/><polygon points="1890.2,732 1898.6,732 1894.4,736.3" fill="#3c414c"/><polygon points="1890.2,789.5 1898.6,789.5 1894.4,793.8" fill="#3c414c"/><circle cx="1907.6" cy="859.7" r="4.6" fill="#3c414c"/><polygon points="1904.8,859.5 1910.4,859.5 1907.6,863" fill="#555a65"/><path d="M1904.8 857.8H1910.4" stroke="#555a65" stroke-width="1"/>
<rect x="410.5" y="1039.5" width="88" height="38" rx="3" fill="#2a303c"/><path d="M423 1046V1072" stroke="#d4d4d4" stroke-width="2" stroke-dasharray="1.7 2.2"/><path d="M436 1053.5L448 1065M448 1053.5L436 1065" stroke="#c9c9c9" stroke-width="3"/><path d="M469.5 1067.5L481 1056" stroke="#bcbcbc" stroke-width="4.4" stroke-linecap="round"/><path d="M489.5 1049.5L484.5 1054.5L481.5 1051.5L485.5 1047.3A6.3 6.3 0 1 0 489.5 1049.5Z" fill="#bcbcbc"/><circle cx="483.2" cy="1054.3" r="5" fill="#bcbcbc"/><path d="M489.8 1049.3L484.3 1054.8" stroke="#2a303c" stroke-width="2.8"/><rect x="497.5" y="1041" width="1012.5" height="36" rx="2.5" fill="#c3c4c6"/><rect x="504.5" y="1051.7" width="23.5" height="16.6" fill="#aeb0b4" stroke="#4d5260" stroke-width="1"/><rect x="504.5" y="1051.7" width="23.5" height="4" fill="#4d5260"/><path d="M507 1059.3L510.5 1061.3L507 1063.3M512 1064.3H517.5" stroke="#3d424f" stroke-width="1" fill="none"/><polygon points="531.5,1057.5 543,1057.5 537.2,1063.8" fill="#565a66"/><polygon points="1493,1062.5 1504,1062.5 1498.5,1056.5" fill="#565a66"/>
</svg>
<div class="t" style="left:4.2px;top:284px;font:18px/18px 'Liberation Sans',sans-serif;color:#e6e6e6;">[</div>
<div class="t" style="left:10.8px;top:281px;font:16px/16px 'Liberation Sans',sans-serif;color:#e6e6e6;">−</div>
<div class="t" style="left:23.0px;top:284px;font:18px/18px 'Liberation Sans',sans-serif;color:#e6e6e6;letter-spacing:0.05px;">][Top][2D Wireframe]</div>
<div class="t" style="left:552.5px;top:1053px;font:italic 17px/17px 'Liberation Mono',monospace;color:#6e7075;letter-spacing:0.74px;">Type a command</div>
<!-- p_status -->
<svg class="b" style="left:0;top:1077px" width="1919" height="52" viewBox="0 1077 1919 52">
<rect x="0" y="1077" width="1919" height="1" fill="#2c333f"/><rect x="0" y="1078" width="1919" height="6.2" fill="#3b4453"/><rect x="0" y="1084.2" width="1919" height="44.8" fill="#222933"/>
<polygon points="76.5,1084 167,1084 152.5,1120 62,1120" fill="#3b4453"/><g stroke="#e2e2e2" stroke-width="3"><path d="M24 1094.3H48.2M24 1101.9H48.2M24 1109.5H48.2"/></g><g stroke="#4b5362" stroke-width="1.5"><path d="M263 1090.5L254.5 1113.5M362.3 1090.5L353.6 1113.5M425 1090.5L416.3 1113.5"/></g><path d="M378.8 1102.2H399.3M389 1092V1112.4" stroke="#e8e8e8" stroke-width="3"/>
<rect x="1035" y="1088.3" width="71.8" height="35.4" fill="#3c4453"/><rect x="1148" y="1088.3" width="61.0" height="35.4" fill="#3c4453"/><rect x="1215" y="1088.3" width="156.0" height="35.4" fill="#3c4453"/><rect x="1373" y="1088.3" width="96.0" height="35.4" fill="#3c4453"/><rect x="1475" y="1088.3" width="170.0" height="35.4" fill="#3c4453"/><rect x="1651" y="1088.3" width="60.0" height="35.4" fill="#3c4453"/><rect x="1713" y="1088.3" width="36.0" height="35.4" fill="#3c4453"/><rect x="1755" y="1088.3" width="36.3" height="35.4" fill="#3c4453"/><rect x="1795" y="1088.3" width="44.2" height="35.4" fill="#3c4453"/><rect x="1843" y="1088.3" width="35.0" height="35.4" fill="#3c4453"/><rect x="1882" y="1088.3" width="37.0" height="35.4" fill="#3c4453"/><rect x="1113.5" y="1088.3" width="34.5" height="35.4" fill="#5c8bc5"/>
<path d="M1125.2 1094.2V1117M1131.4 1094.2V1117M1137.6 1094.2V1117M1119.5 1100.2H1142.5M1119.5 1106.2H1142.5M1119.5 1112.2H1142.5" stroke="#fff" stroke-width="1.2"/><rect x="1158.0" y="1097.0" width="3" height="3" fill="#e6e6e6"/><rect x="1158.0" y="1104.0" width="3" height="3" fill="#e6e6e6"/><rect x="1158.0" y="1111.0" width="3" height="3" fill="#e6e6e6"/><rect x="1165.2" y="1097.0" width="3" height="3" fill="#e6e6e6"/><rect x="1165.2" y="1104.0" width="3" height="3" fill="#e6e6e6"/><rect x="1165.2" y="1111.0" width="3" height="3" fill="#e6e6e6"/><rect x="1172.4" y="1097.0" width="3" height="3" fill="#e6e6e6"/><rect x="1172.4" y="1104.0" width="3" height="3" fill="#e6e6e6"/><rect x="1172.4" y="1111.0" width="3" height="3" fill="#e6e6e6"/><polygon points="1191,1103 1203.5,1103 1197.2,1109.3" fill="#dcdcdc"/>
<g fill="none" stroke="#e6e6e6" stroke-width="1.2"><path d="M1221.5 1094.2V1117.7H1245M1221.5 1110.5H1229V1117.7"/><circle cx="1267" cy="1106.2" r="9.8"/><path d="M1266 1106.2H1281M1266 1106.2L1276.8 1096.6"/><path d="M1379 1114.6H1403.2M1379 1114.6L1397.5 1097"/><rect x="1418.8" y="1097.8" width="20.2" height="20" /></g><rect x="1386.8" y="1104.6" width="3.6" height="3.6" fill="#e6e6e6"/><rect x="1415.4" y="1094.9" width="6" height="6" fill="#3c4453" stroke="#e9a36a" stroke-width="1.1"/><path d="M1319.8 1096L1337.7 1113.4" stroke="#e5484d" stroke-width="1.1"/><path d="M1329.4 1094V1115.3" stroke="#3fd06f" stroke-width="1.2"/><rect x="1327.6" y="1103.4" width="3.6" height="3.6" fill="#3c4453" stroke="#fff" stroke-width="1"/><polygon points="1293.4,1103 1305,1103 1299.2,1109.3" fill="#dcdcdc"/><polygon points="1353.3,1103 1365.3,1103 1359.3,1109.3" fill="#dcdcdc"/><polygon points="1451,1103 1463,1103 1457.0,1109.3" fill="#dcdcdc"/>
<path d="M1491.8 1095.3L1495.5 1108.5L1502.6 1118L1491.8 1112.3L1481 1118L1488.1 1108.5Z" fill="#dedede"/><circle cx="1500.7" cy="1099.6" r="3.6" fill="none" stroke="#e6e6e6" stroke-width="1.1"/><path d="M1528.2 1095.3L1531.9 1108.5L1539.0 1118L1528.2 1112.3L1517.4 1118L1524.5 1108.5Z" fill="#dedede"/><path d="M1537.5 1095L1532.5 1101H1535.5L1532 1106.5L1539 1099.5H1536Z" fill="#e6e6e6"/><path d="M1564.8 1095.3L1568.5 1108.5L1575.6 1118L1564.8 1112.3L1554 1118L1561.1 1108.5Z" fill="#dedede"/><polygon points="1627,1103 1639,1103 1633.0,1109.3" fill="#dcdcdc"/><polygon points="1680.1,1109.6 1679.2,1111.8 1675.2,1111.6 1674.1,1112.7 1674.3,1116.7 1672.1,1117.6 1669.4,1114.7 1667.8,1114.7 1665.1,1117.6 1662.9,1116.7 1663.1,1112.7 1662.0,1111.6 1658.0,1111.8 1657.1,1109.6 1660.0,1106.9 1660.0,1105.3 1657.1,1102.6 1658.0,1100.4 1662.0,1100.6 1663.1,1099.5 1662.9,1095.5 1665.1,1094.6 1667.8,1097.5 1669.4,1097.5 1672.1,1094.6 1674.3,1095.5 1674.1,1099.5 1675.2,1100.6 1679.2,1100.4 1680.1,1102.6 1677.2,1105.3 1677.2,1106.9" fill="#dedede"/><circle cx="1668.6" cy="1106.1" r="4.3" fill="#3c4453"/><polygon points="1693.3,1103 1705.2,1103 1699.2,1109.3" fill="#dcdcdc"/><path d="M1719.3 1106.1H1742.3M1730.8 1094.6V1117.6" stroke="#e6e6e6" stroke-width="2.8"/><g fill="none" stroke="#e6e6e6" stroke-width="1.1"><rect x="1761.2" y="1095" width="9.2" height="9.2"/><circle cx="1779.4" cy="1105" r="5"/><path d="M1770.4 1108.6L1776.3 1117.5H1764.5Z"/></g>
<path d="M1805 1094.6H1818.5L1824 1100V1116H1805Z" fill="#2f6fc2"/><path d="M1818.5 1094.6V1100H1824Z" fill="#8ab6e8"/><path d="M1805 1108.5Q1813 1106 1824 1110V1116H1805Z" fill="#f2b430"/><path d="M1805 1102H1817M1811 1096V1108" stroke="#cfe3fa" stroke-width="1"/><rect x="1808.8" y="1099.8" width="4.4" height="4.4" fill="#2f6fc2" stroke="#fff" stroke-width="1"/><path d="M1817.5 1113.5L1821 1117L1827.5 1110.5" fill="none" stroke="#3fd06f" stroke-width="2.2"/><rect x="1849.3" y="1098.2" width="23.4" height="15.4" fill="none" stroke="#e6e6e6" stroke-width="1.2"/><path d="M1853 1110.5L1858.5 1105.5M1853 1106.5V1110.5H1857M1869 1101.3L1863.5 1106.3M1865 1101.3H1869V1105.3" fill="none" stroke="#e6e6e6" stroke-width="1.2"/><path d="M1888 1097.3H1912M1888 1106.1H1912M1888 1115H1912" stroke="#e6e6e6" stroke-width="2.6"/>
</svg>
<div class="t" style="left:87.5px;top:1095px;font:bold 18px/18px 'Liberation Sans',sans-serif;color:#f4f4f4;letter-spacing:0.25px;">Model</div>
<div class="t" style="left:177.5px;top:1096px;font:17.5px/17.5px 'Liberation Sans',sans-serif;color:#e6e6e6;letter-spacing:-0.30px;">Layout1</div>
<div class="t" style="left:276.7px;top:1096px;font:17.5px/17.5px 'Liberation Sans',sans-serif;color:#e6e6e6;letter-spacing:-0.21px;">Layout2</div>
<div class="t" style="left:1041.0px;top:1099px;font:17.5px/17.5px 'Liberation Sans',sans-serif;color:#f0f0f0;letter-spacing:-0.43px;">MODEL</div>
<div class="t" style="left:1591.6px;top:1099px;font:17.5px/17.5px 'Liberation Sans',sans-serif;color:#f4f4f4;letter-spacing:-1.42px;">1:75</div>
<!-- p_taskbar -->
<svg class="b" style="left:0;top:1128px" width="1919" height="71" viewBox="0 1128 1919 71">
<defs><linearGradient id="gw" x1="0" y1="0" x2="1" y2="1"><stop offset="0" stop-color="#7ed7fc"/><stop offset="1" stop-color="#1496ef"/></linearGradient><linearGradient id="ge" x1="0" y1="0" x2="1" y2="1"><stop offset="0" stop-color="#2a7fd6"/><stop offset=".5" stop-color="#1fa3d8"/><stop offset="1" stop-color="#55d36b"/></linearGradient><linearGradient id="gcc" x1="0" y1="0" x2="1" y2="1"><stop offset="0" stop-color="#c23bff"/><stop offset=".3" stop-color="#ff2d6f"/><stop offset=".55" stop-color="#ff8a1f"/><stop offset=".8" stop-color="#c9e21f"/><stop offset="1" stop-color="#1fd1a5"/></linearGradient><linearGradient id="gwd" x1="0" y1="0" x2="0" y2="1"><stop offset="0" stop-color="#b9b4f0"/><stop offset=".35" stop-color="#4aa5f5"/><stop offset="1" stop-color="#1247c9"/></linearGradient><linearGradient id="gpp" x1="0" y1="0" x2="1" y2="1"><stop offset="0" stop-color="#ffb04a"/><stop offset=".5" stop-color="#f0553c"/><stop offset="1" stop-color="#c8243c"/></linearGradient><linearGradient id="gtv" x1="0" y1="0" x2="1" y2="1"><stop offset="0" stop-color="#fafafa"/><stop offset="1" stop-color="#c4c4c4"/></linearGradient><linearGradient id="gtm" x1="0" y1="0" x2="0" y2="1"><stop offset="0" stop-color="#8b93f2"/><stop offset="1" stop-color="#4e52c0"/></linearGradient><linearGradient id="ge2" x1="0" y1="0" x2="1" y2=".55"><stop offset="0" stop-color="#2aa6ee"/><stop offset=".5" stop-color="#2fc3d8"/><stop offset="1" stop-color="#6fe35a"/></linearGradient><linearGradient id="gw1" x1="0" y1="0" x2="1" y2="0"><stop offset="0" stop-color="#35c8f6"/><stop offset=".6" stop-color="#7cc4f4"/><stop offset="1" stop-color="#c9a9f2"/></linearGradient><linearGradient id="gw2" x1="0" y1="0" x2="1" y2="0"><stop offset="0" stop-color="#2396f2"/><stop offset="1" stop-color="#5a78ea"/></linearGradient></defs>
<rect x="0" y="1128" width="1919" height="71" fill="#1c1c1c"/><rect x="0" y="1128" width="1919" height="1.6" fill="#3c3c3c"/>
<circle cx="12.5" cy="1175" r="8.3" fill="none" stroke="#e21b23" stroke-width="1.2"/><circle cx="12.5" cy="1175" r="5.8" fill="#ff1010"/><path d="M30 1160.7Q32 1152 41 1150L45 1160.7Z" fill="#f5b437"/><rect x="39.5" y="1138.7" width="35" height="22" rx="10" fill="#2b2b2b"/>
<g fill="url(#gw)"><rect x="153.8" y="1147" width="16.6" height="16.6" rx="1"/><rect x="172.2" y="1147" width="16.6" height="16.6" rx="1"/><rect x="153.8" y="1165.4" width="16.6" height="16.6" rx="1"/><rect x="172.2" y="1165.4" width="16.6" height="16.6" rx="1"/></g>
<circle cx="250" cy="1162.3" r="13" fill="#3a3a3a" stroke="#e8e8e8" stroke-width="3.6"/><path d="M259.5 1172.5L265.3 1178.8" stroke="#d0d0d0" stroke-width="4" stroke-linecap="round"/>
<rect x="310.8" y="1156.3" width="26.8" height="23.8" rx="2.5" fill="#5e5e5e"/><rect x="320" y="1147.5" width="27" height="23.8" rx="2.5" fill="url(#gtv)"/><rect x="320" y="1156.3" width="17.6" height="15" fill="#9c9c9c" opacity=".55"/>
<path d="M388.8 1150Q388.8 1147.5 391 1147.5H399.5L403 1151H423Q425 1151 425 1153V1156H388.8Z" fill="#e8a51e"/><rect x="388.8" y="1152.5" width="36.2" height="28" rx="2" fill="#fbd04e"/><path d="M395 1180.5V1173Q395 1170 398 1170H415.8Q418.8 1170 418.8 1173V1180.5Z" fill="#2b8ae6"/><rect x="400" y="1174" width="13.5" height="2" rx="1" fill="#1660b8"/><rect x="402.5" y="1188.8" width="9.5" height="3.8" rx="1.9" fill="#8c8c8c"/>
<clipPath id="ec"><circle cx="485.1" cy="1163.9" r="18.1"/></clipPath><g clip-path="url(#ec)"><rect x="466" y="1145" width="38" height="38" fill="url(#ge2)"/><path d="M466 1170Q466 1153 481 1151.5Q493 1152 495 1162Q493 1156.5 486 1156Q476 1157.5 476.5 1168Q478 1176 488 1178L486 1184H466Z" fill="#1a74d4"/><path d="M476.5 1168Q476.5 1159 484.5 1158Q480.5 1161 481 1166Q483 1172.5 491 1174Q497 1175 504 1171V1184H480Q476.5 1176 476.5 1168Z" fill="#0f57a8"/><path d="M481 1163.8A3.9 3.9 0 1 1 488.7 1164.6Q488.5 1168 492.5 1169.8Q497.5 1171.2 504 1168.5V1173Q497 1176 491 1174Q485.5 1171.8 485 1167.6Q481.3 1167.3 481 1163.8Z" fill="#1c1c1c"/><path d="M500.5 1173.5L505 1171V1184H494Z" fill="#1c1c1c"/></g><rect x="467" y="1170" width="17.8" height="11.8" rx="1" fill="#f39a06"/><rect x="467" y="1176.3" width="17.8" height="5.5" fill="#b9690a"/><path d="M473.6 1170V1168.3H478.4V1170" fill="none" stroke="#3a2a10" stroke-width="1.3"/><rect x="475" y="1175.2" width="2" height="2" fill="#ffe14a"/><rect x="480.9" y="1188.2" width="9.2" height="4.6" rx="2.3" fill="#a0a0a0"/>
<path d="M547 1146L563 1152.9L579.1 1146V1174.8L563 1182L547 1174.8Z" fill="#c0302e"/><path d="M553.9 1156.2L563 1160.2L572.2 1156.2V1170.8L563 1174.8L553.9 1170.8Z" fill="#1c1c1c"/>
<clipPath id="wc"><rect x="627.4" y="1147.1" width="27.2" height="32.9" rx="4.5"/></clipPath><g clip-path="url(#wc)"><rect x="627" y="1147" width="28" height="11.5" fill="url(#gw1)"/><rect x="627" y="1158.4" width="28" height="10" fill="url(#gw2)"/><rect x="627" y="1168.2" width="28" height="12" fill="#1132c6"/></g><rect x="623.3" y="1162.7" width="14.7" height="14.6" rx="3" fill="#1b47c0"/><text x="630.6" y="1174.4" font-family="Liberation Sans,sans-serif" font-weight="bold" font-size="11.5" fill="#fff" text-anchor="middle">W</text>
<rect x="790" y="1148" width="22" height="22" rx="2" fill="#1a79d4"/><rect x="801" y="1148" width="11" height="11" fill="#3fb0f3"/><rect x="790" y="1159" width="11" height="11" fill="#1263b4"/><rect x="801" y="1159" width="11" height="8" fill="#2591e2"/><path d="M787 1167L814.3 1163.5V1178Q814.3 1180 812.3 1180H789Q787 1180 787 1178Z" fill="#2b9bea"/><path d="M787 1167L814.3 1180H789Q787 1180 787 1178Z" fill="#1a6fc4"/><rect x="778.8" y="1155" width="17.5" height="17.5" rx="2.5" fill="#0f6cbd"/><text x="787.5" y="1168.2" font-family="Liberation Sans,sans-serif" font-weight="bold" font-size="12.5" fill="#fff" text-anchor="middle">O</text>
<rect x="858" y="1149" width="35" height="23" rx="2" fill="#0f6cbd"/><rect x="875" y="1149" width="18" height="12" fill="#1a8ae2"/><rect x="880" y="1161" width="13" height="11" fill="#2aa0f0"/><circle cx="869" cy="1160.5" r="6" fill="#49c5f5"/><path d="M857.5 1182V1175Q857.5 1168.5 864 1168.5H873Q879 1168.5 879 1175V1182Z" fill="#49c5f5"/>
<circle cx="952.9" cy="1163.5" r="17" fill="none" stroke="#ea2f5c" stroke-width="1.7"/><ellipse cx="957.6" cy="1163.5" rx="9.6" ry="14.6" fill="none" stroke="#ea2f5c" stroke-width="1.5"/>
<circle cx="1030.8" cy="1163.5" r="17" fill="url(#gpp)"/><path d="M1030 1147Q1040 1152 1037 1160Q1047 1163 1047.5 1166Q1046 1156 1030 1147Z" fill="#ffd0a8" opacity=".6"/><path d="M1029 1147.5Q1040 1155 1034 1163Q1040 1168 1047.5 1166A17 17 0 0 0 1029 1147.5Z" fill="#f77a8a" opacity=".7"/><rect x="1013" y="1163" width="15" height="14.2" rx="3" fill="#c21d2e"/><text x="1020.5" y="1174.6" font-family="Liberation Sans,sans-serif" font-weight="bold" font-size="11.5" fill="#fff" text-anchor="middle">P</text><rect x="1026.6" y="1188.5" width="9.5" height="3.8" rx="1.9" fill="#8c8c8c"/>
<path d="M1099.5 1152V1149Q1099.5 1147.5 1101 1147.5H1116Q1117.5 1147.5 1117.5 1149V1152" fill="none" stroke="#2aa7f0" stroke-width="1.8"/><path d="M1091.3 1151H1126V1177.5Q1126 1181.8 1121.7 1181.8H1095.6Q1091.3 1181.8 1091.3 1177.5Z" fill="#f4f4f4"/><rect x="1101" y="1158.8" width="7" height="7" fill="#f25022"/><rect x="1109" y="1158.8" width="7" height="7" fill="#7fba00"/><rect x="1101" y="1166.8" width="7" height="7" fill="#00a4ef"/><rect x="1109" y="1166.8" width="7" height="7" fill="#ffb900"/>
<circle cx="1195.3" cy="1153.5" r="5" fill="#7b83eb"/><path d="M1189 1160H1202.5V1172Q1202.5 1177.5 1196 1178H1189Z" fill="#6a70d8"/><circle cx="1182" cy="1152" r="6.2" fill="#8b93f2"/><path d="M1174 1160H1192V1172Q1192 1179.3 1184.5 1179.3H1181.5Q1174 1179.3 1174 1172Z" fill="url(#gtm)"/><rect x="1168.7" y="1162.4" width="15.3" height="14.6" rx="3" fill="#4045b5"/><text x="1176.4" y="1174.2" font-family="Liberation Sans,sans-serif" font-weight="bold" font-size="11.5" fill="#fff" text-anchor="middle">T</text>
<rect x="1236.3" y="1129" width="1.6" height="70" fill="#9a9a9a"/><rect x="1411.3" y="1128" width="1.6" height="71" fill="#9a9a9a"/>
<rect x="1255.5" y="1134.5" width="59" height="59.5" rx="5" fill="#2c2c2c" stroke="#383838" stroke-width="1"/><polygon points="1267.8,1150 1272.8,1146 1272.8,1171.4 1267.8,1176" fill="#ea5a84"/><polygon points="1267.8,1176 1272.8,1171.4 1299,1171.4 1301,1174 1301,1181.3 1272,1181.3" fill="#8a0b33"/><rect x="1299" y="1151" width="2" height="25" fill="#8a0b33"/><rect x="1272.8" y="1146" width="26.2" height="25.4" fill="#e2104f"/><text x="1285.8" y="1167" font-family="Liberation Sans,sans-serif" font-weight="bold" font-size="20" fill="#fff" stroke="#fff" stroke-width="0.7" text-anchor="middle">A</text><text x="1285.8" y="1180" font-family="Liberation Sans,sans-serif" font-weight="bold" font-size="7.6" fill="#fff" text-anchor="middle">CAD</text><rect x="1272.8" y="1188.3" width="24.5" height="4.7" rx="2.3" fill="#2fe08a"/><circle cx="1353.6" cy="1163.8" r="2.3" fill="#f0f0f0"/><circle cx="1362.8" cy="1163.8" r="2.3" fill="#f0f0f0"/><circle cx="1372" cy="1163.8" r="2.3" fill="#f0f0f0"/>
<path d="M1471.5 1168.5L1479.2 1160.7L1487 1168.5" fill="none" stroke="#f0f0f0" stroke-width="2.2"/><path d="M1519 1171H1532Q1536.3 1171 1536.3 1167Q1536.3 1163.5 1533 1163Q1532 1155.5 1525.5 1155.5Q1520.5 1155.5 1519 1160.5Q1515 1161 1515 1166Q1515 1171 1519 1171Z" fill="#1a86e0"/><path d="M1519 1160.5Q1524 1158 1528 1163L1536 1168Q1535 1171 1532 1171H1519Q1515 1171 1515 1166Q1515 1161 1519 1160.5Z" fill="#3fb0f5" opacity=".8"/><circle cx="1532.5" cy="1169.5" r="6.3" fill="#d3212f"/><path d="M1530 1167L1535 1172M1535 1167L1530 1172" stroke="#fff" stroke-width="1.4"/><rect x="1564" y="1156.2" width="22.5" height="14.5" rx="3" fill="none" stroke="#f0f0f0" stroke-width="1.5"/><rect x="1568.3" y="1160" width="1.8" height="1.8" fill="#f0f0f0"/><rect x="1572.5" y="1160" width="1.8" height="1.8" fill="#f0f0f0"/><rect x="1576.7" y="1160" width="1.8" height="1.8" fill="#f0f0f0"/><rect x="1580.9" y="1160" width="1.8" height="1.8" fill="#f0f0f0"/><rect x="1570.3" y="1163.3" width="1.8" height="1.8" fill="#f0f0f0"/><rect x="1574.5" y="1163.3" width="1.8" height="1.8" fill="#f0f0f0"/><rect x="1578.7" y="1163.3" width="1.8" height="1.8" fill="#f0f0f0"/><rect x="1570" y="1166.6" width="10.5" height="1.6" fill="#f0f0f0"/><g fill="none" stroke="#f0f0f0" stroke-width="1.8" stroke-linecap="round"><path d="M1678 1161Q1689 1150 1700.3 1161"/><path d="M1682 1165Q1689 1158 1696.3 1165"/><path d="M1685.7 1168.6Q1689 1165.3 1692.5 1168.6"/></g><circle cx="1689.1" cy="1170.8" r="1.7" fill="#f0f0f0"/><path d="M1714 1160.5H1718L1723.5 1155.5V1171.5L1718 1166.5H1714Z" fill="none" stroke="#f0f0f0" stroke-width="1.5" stroke-linejoin="round"/><g fill="none" stroke-width="1.5" stroke-linecap="round"><path d="M1726.8 1160Q1729.5 1163.5 1726.8 1167" stroke="#f0f0f0"/><path d="M1729.8 1157.3Q1734.5 1163.5 1729.8 1169.7" stroke="#f0f0f0"/><path d="M1733 1154.8Q1739.8 1163.5 1733 1172.2" stroke="#6a6a6a"/></g><path d="M1757 1158.2H1767Q1769.5 1158.2 1769.5 1160.7V1168.5Q1769.5 1171 1767 1171H1751" fill="none" stroke="#f0f0f0" stroke-width="1.6"/><rect x="1770.3" y="1161.3" width="2.8" height="6" rx="1.2" fill="#f0f0f0"/><path d="M1750 1169Q1748 1158 1758.5 1152.5Q1760 1158 1757 1163.5Q1762 1161 1763.5 1156.5Q1767 1164 1759 1168.5Q1754 1170.5 1750 1169Z" fill="#f0f0f0"/><path d="M1757 1160.5H1765V1168H1759" fill="none" stroke="#1c1c1c" stroke-width="1"/></svg>
<div class="b" style="left:702.2px;top:1146.8px;width:33.2px;height:31.2px;border-radius:6.5px;background:conic-gradient(from 0deg at 50% 50%,#ff1f1f 0deg,#ff5a00 50deg,#ffa400 90deg,#c8e020 130deg,#5fd83a 160deg,#22b8e8 200deg,#3f62ff 235deg,#8a35ee 270deg,#d81aa8 310deg,#ff1f55 340deg,#ff1f1f 360deg)"></div><svg class="b" style="left:702.2px;top:1146.8px" width="34" height="32" viewBox="702.2 1146.8 34 32"><g fill="none" stroke="#fff" stroke-width="1.6" stroke-linecap="round"><circle cx="712.9" cy="1164.8" r="5"/><path d="M716.3 1158.6A7.3 7.3 0 1 1 722 1170H716"/><path d="M715.2 1167.6L721.8 1161.2A3.6 3.6 0 0 1 727.3 1165.6"/></g></svg>
<div class="t" style="left:46.3px;top:1143px;font:16px/16px 'Liberation Sans',sans-serif;color:#f4f4f4;letter-spacing:-0.50px;">28°</div>
<div class="t" style="left:30.0px;top:1164px;font:22.5px/22.5px 'Liberation Sans',sans-serif;color:#ececec;letter-spacing:-0.51px;transform:scaleY(1.1);transform-origin:0 18px;">screen</div>
<div class="t" style="left:100.0px;top:1164px;font:bold 22.5px/22.5px 'Liberation Sans',sans-serif;color:#f4f4f4;letter-spacing:-1.89px;transform:scaleY(1.1);transform-origin:0 18px;">rec</div>
<div class="t" style="left:1615.5px;top:1146px;font:16.5px/16.5px 'Liberation Sans',sans-serif;color:#f4f4f4;letter-spacing:-0.88px;">ENG</div>
<div class="t" style="left:1622.0px;top:1168px;font:16.5px/16.5px 'Liberation Sans',sans-serif;color:#f4f4f4;letter-spacing:-1.92px;">US</div>
<div class="t" style="left:1819.3px;top:1144px;font:16.5px/16.5px 'Liberation Sans',sans-serif;color:#f4f4f4;letter-spacing:0.46px;">10:44 am</div>
<div class="t" style="left:1799.3px;top:1168px;font:16.5px/16.5px 'Liberation Sans',sans-serif;color:#f4f4f4;letter-spacing:1.18px;">17/11/2025</div>
</div></body></html>
